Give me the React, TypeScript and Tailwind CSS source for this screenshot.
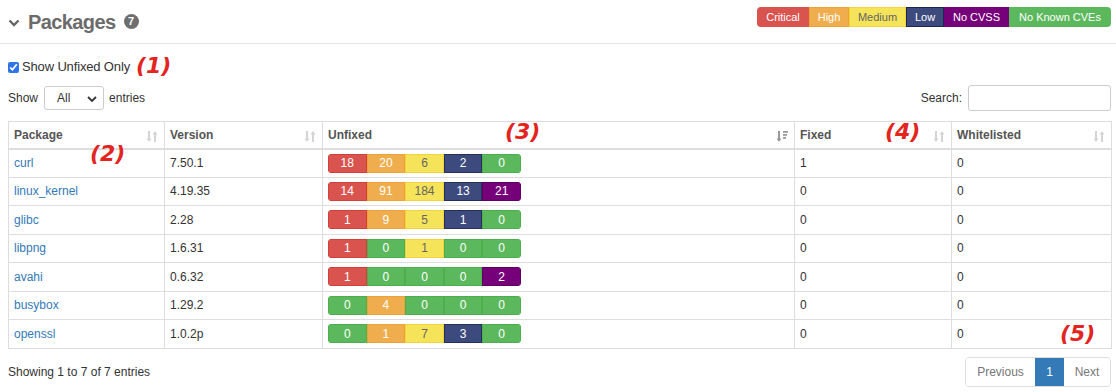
import React from "react";

type Seg = { v: number; c: string };

const COLORS: Record<string, string> = {
  crit: "bg-[#d9534f] border-[#d43f3a] text-white",
  high: "bg-[#f0ad4e] border-[#eea236] text-white",
  med: "bg-[#f5e35a] border-[#f0d43a] text-[#666]",
  low: "bg-[#3c4a7d] border-[#262f5a] text-white",
  nocvss: "bg-[#76007a] border-[#5e0061] text-white",
  ok: "bg-[#5cb85c] border-[#4cae4c] text-white",
};

function seg(v: number, kind: string): Seg {
  return { v, c: v === 0 ? COLORS.ok : COLORS[kind] };
}

const rows = [
  { name: "curl", ver: "7.50.1", u: [18, 20, 6, 2, 0], fixed: 1 },
  { name: "linux_kernel", ver: "4.19.35", u: [14, 91, 184, 13, 21], fixed: 0 },
  { name: "glibc", ver: "2.28", u: [1, 9, 5, 1, 0], fixed: 0 },
  { name: "libpng", ver: "1.6.31", u: [1, 0, 1, 0, 0], fixed: 0 },
  { name: "avahi", ver: "0.6.32", u: [1, 0, 0, 0, 2], fixed: 0 },
  { name: "busybox", ver: "1.29.2", u: [0, 4, 0, 0, 0], fixed: 0 },
  { name: "openssl", ver: "1.0.2p", u: [0, 1, 7, 3, 0], fixed: 0 },
];

const kinds = ["crit", "high", "med", "low", "nocvss"];

function SortIcon({ active }: { active?: boolean }) {
  const col = active ? "#999" : "#d4d4d4";
  if (active) {
    return (
      <svg width="12" height="13" viewBox="0 0 12 13" className="absolute right-[6px] top-[8px]">
        <path d="M3 1v8.5" stroke={col} strokeWidth="2" />
        <path d="M0.5 8.5L3 12L5.5 8.5Z" fill={col} />
        <rect x="7" y="1" width="5" height="1.8" fill={col} />
        <rect x="7" y="4" width="4" height="1.8" fill={col} />
        <rect x="7" y="7" width="3" height="1.8" fill={col} />
      </svg>
    );
  }
  return (
    <svg width="12" height="13" viewBox="0 0 12 13" className="absolute right-[6px] top-[8px]">
      <path d="M3 1v8.5" stroke={col} strokeWidth="2" />
      <path d="M0.5 8.5L3 12L5.5 8.5Z" fill={col} />
      <path d="M9 12V3.5" stroke={col} strokeWidth="2" />
      <path d="M6.5 4.5L9 1L11.5 4.5Z" fill={col} />
    </svg>
  );
}

function Bar({ u }: { u: number[] }) {
  const segs = u.map((v, i) => seg(v, kinds[i]));
  return (
    <div className="flex w-[193px] h-[19px] rounded-[4px] overflow-hidden">
      {segs.map((s, i) => (
        <div
          key={i}
          className={`flex-1 flex items-center justify-center border text-[12px] leading-none ${s.c}`}
        >
          {s.v}
        </div>
      ))}
    </div>
  );
}

function Note({ t, cls }: { t: string; cls: string }) {
  return (
    <span
      className={`absolute text-[#e3241f] font-bold italic text-[22px] leading-none pointer-events-none ${cls}`}
      style={{ fontFamily: '"DejaVu Sans", "Liberation Sans", sans-serif' }}
    >
      {t}
    </span>
  );
}

export default function App() {
  const th = "relative text-left font-bold text-[12px] text-[#555] px-[5px] h-[27px] border border-[#ddd] border-b-2 border-b-[#ddd]";
  const td = "px-[5px] py-[4px] border border-[#ddd] text-[12px] text-[#333] align-middle";
  return (
    <div
      className="relative w-[1116px] h-[392px] bg-white overflow-hidden text-[#333]"
      style={{ fontFamily: '"Liberation Sans", Arial, sans-serif' }}
    >
      {/* Header */}
      <div className="flex items-center justify-between pl-[8px] pr-[5px] h-[44px] border-b border-[#e5e5e5] mx-0">
        <div className="flex items-center">
          <svg width="12" height="8" viewBox="0 0 12 8" className="mr-[8px] mt-[2px]">
            <path d="M1.5 1.5L6 6L10.5 1.5" stroke="#666" strokeWidth="2.4" fill="none" />
          </svg>
          <span className="text-[20px] font-bold text-[#6b6b6b] leading-none tracking-[-0.6px]">Packages</span>
          <span className="ml-[8px] w-[15px] h-[15px] rounded-full bg-[#6e6e6e] text-white text-[11px] font-bold flex items-center justify-center leading-none">
            7
          </span>
        </div>
        <div className="flex h-[20px] rounded-[4px] overflow-hidden text-[11px] leading-none mb-[9px]">
          <div className="w-[52px] flex items-center justify-center bg-[#d9534f] text-white">Critical</div>
          <div className="w-[40px] flex items-center justify-center bg-[#f0ad4e] text-white border border-[#eea236]">High</div>
          <div className="w-[57px] flex items-center justify-center bg-[#f5e35a] text-[#666] border border-[#f0d43a]">Medium</div>
          <div className="w-[38px] flex items-center justify-center bg-[#3c4a7d] text-white border border-[#1e2550]">Low</div>
          <div className="w-[65px] flex items-center justify-center bg-[#76007a] text-white">No CVSS</div>
          <div className="w-[102px] flex items-center justify-center bg-[#5cb85c] text-white">No Known CVEs</div>
        </div>
      </div>

      {/* Checkbox */}
      <div className="flex items-center pl-[8px] mt-[16px] h-[14px]">
        <input type="checkbox" defaultChecked className="w-[11px] h-[11px] m-0 mr-[3px] accent-[#2f74e8]" />
        <span className="text-[13px] text-[#333] tracking-[-0.15px]">Show Unfixed Only</span>
      </div>

      {/* Show entries / search */}
      <div className="flex items-center justify-between pl-[8px] pr-[5px] mt-[11px] h-[26px]">
        <div className="flex items-center text-[12px]">
          <span>Show</span>
          <div className="relative ml-[6px] mr-[5px] w-[60px] h-[24px] border border-[#ccc] rounded-[3px] flex items-center pl-[12px] bg-white">
            <span className="text-[12px]">All</span>
            <svg width="10" height="7" viewBox="0 0 10 7" className="absolute right-[6px] top-[9px]">
              <path d="M1 1L5 5L9 1" stroke="#333" strokeWidth="1.8" fill="none" />
            </svg>
          </div>
          <span>entries</span>
        </div>
        <div className="flex items-center text-[12px]">
          <span className="mr-[6px]">Search:</span>
          <div className="w-[143px] h-[26px] border border-[#ccc] rounded-[3px] bg-white" />
        </div>
      </div>

      {/* Table */}
      <div className="pl-[8px] mt-[10px]">
        <table className="table-fixed border-collapse w-[1103px]">
          <colgroup>
            <col className="w-[156px]" />
            <col className="w-[158px]" />
            <col className="w-[472px]" />
            <col className="w-[157px]" />
            <col className="w-[160px]" />
          </colgroup>
          <thead>
            <tr>
              <th className={th}>Package<SortIcon /></th>
              <th className={th}>Version<SortIcon /></th>
              <th className={th}>Unfixed<SortIcon active /></th>
              <th className={th}>Fixed<SortIcon /></th>
              <th className={th}>Whitelisted<SortIcon /></th>
            </tr>
          </thead>
          <tbody>
            {rows.map((r) => (
              <tr key={r.name} className="h-[28.5px]">
                <td className={td}>
                  <span className="text-[#337ab7]">{r.name}</span>
                </td>
                <td className={td}>{r.ver}</td>
                <td className={td}>
                  <Bar u={r.u} />
                </td>
                <td className={td}>{r.fixed}</td>
                <td className={td}>0</td>
              </tr>
            ))}
          </tbody>
        </table>
      </div>

      {/* Footer */}
      <div className="flex items-center justify-between pl-[8px] pr-[5px] mt-[8px]">
        <span className="text-[12px] text-[#333]">Showing 1 to 7 of 7 entries</span>
        <div className="flex h-[30px] text-[12px] rounded-[4px] overflow-hidden border border-[#ddd]">
          <div className="w-[69px] flex items-center justify-center text-[#777] bg-white">Previous</div>
          <div className="w-[29px] flex items-center justify-center text-white bg-[#337ab7]">1</div>
          <div className="w-[46px] flex items-center justify-center text-[#777] bg-white">Next</div>
        </div>
      </div>

      {/* Annotations */}
      <Note t="(1)" cls="left-[136px] top-[55px]" />
      <Note t="(2)" cls="left-[90px] top-[143px]" />
      <Note t="(3)" cls="left-[505px] top-[121px]" />
      <Note t="(4)" cls="left-[885px] top-[121px]" />
      <Note t="(5)" cls="left-[1060px] top-[323px]" />
    </div>
  );
}
